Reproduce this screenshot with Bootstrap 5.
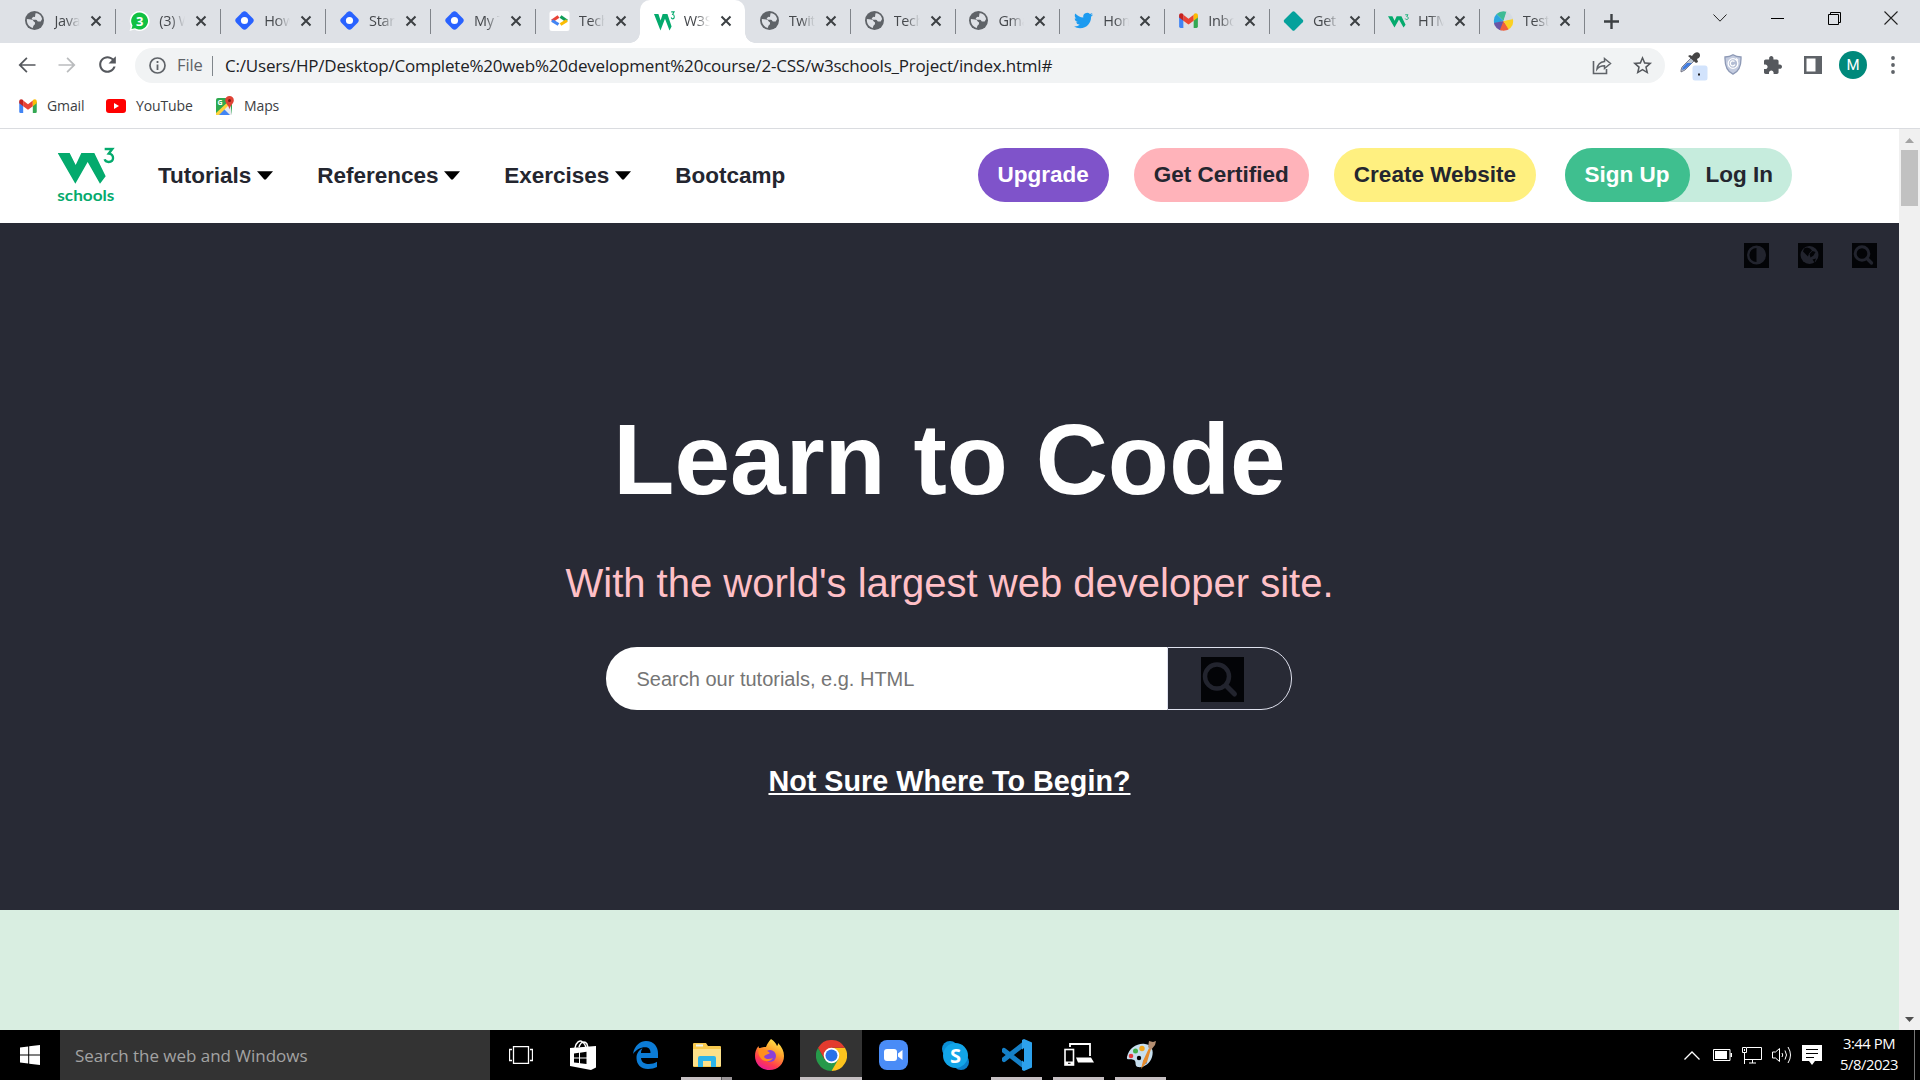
<!DOCTYPE html>
<html lang="en">
<head>
<meta charset="utf-8">
<meta name="viewport" content="width=device-width, initial-scale=1">
<title>W3Schools</title>
<link href="https://cdn.jsdelivr.net/npm/bootstrap@5.3.0/dist/css/bootstrap.min.css" rel="stylesheet">
<style>
  body { width: 1920px; height: 1080px; overflow: hidden; background: #fff; }
  svg { display: block; flex: none; }
  .ui-font { font-family: "Open Sans", "Noto Sans", sans-serif; }
  .site-font { font-family: "Liberation Sans", Arial, sans-serif; color: #282a35; }

  /* browser chrome */
  .tabstrip { height: 43px; background: #dee1e6; padding-left: 11px; }
  .tab-item { width: 104.9px; height: 43px; padding: 0 0 2px 13.4px; position: relative; font-size: 14.5px; letter-spacing: -.35px; color: #45484c; }
  .tab-item::after { content: ""; position: absolute; right: -.5px; top: 9px; width: 1px; height: 25px; background: #80848a; }
  .tab-item.before-active::after, .tab-item.current::after { display: none; }
  .tab-item.current { background: #fff; border-radius: 10px 10px 0 0; }
  .tab-item svg:not(.tab-close) { width: 21px; }
  .tab-curve { position: absolute; bottom: 0; width: 10px; height: 10px; }
  .curve-l { left: -10px; background: radial-gradient(circle at 0 0, #dee1e6 9.5px, #fff 10px); }
  .curve-r { right: -10px; background: radial-gradient(circle at 100% 0, #dee1e6 9.5px, #fff 10px); }
  .tab-title { width: 26px; margin-left: 9px; overflow: hidden; white-space: nowrap; -webkit-mask-image: linear-gradient(90deg, #000 45%, transparent); mask-image: linear-gradient(90deg, #000 45%, transparent); }
  .tab-close { margin-left: 10px; }
  .win-cell { width: 57.2px; height: 36px; }
  .toolbar-row { height: 43px; padding-left: 7px; padding-right: 7px; }
  .nav-cell { width: 40px; height: 40px; }
  .omnibox { width: 1530px; height: 35px; border-radius: 18px; background: #f1f3f4; margin-left: 8px; padding-left: 14px; font-size: 17px; margin-top: 2px; }
  .omni-file { color: #5f6368; margin-left: 11px; font-size: 16.5px; width: 36px; letter-spacing: -.1px; }
  .omni-sep { width: 1px; height: 20px; background: #80868b; margin-left: -1px; }
  .omni-url { color: #202124; margin-left: 12px; white-space: nowrap; letter-spacing: -.2px; }
  .omni-tools { margin-right: 3px; }
  .ext-cells { margin-left: 8px; }
  .avatar-dot { width: 28px; height: 28px; background: #00897b; color: #fff; font: 400 15px Roboto, sans-serif; }
  .bookmarks-row { height: 43px; padding-left: 19px; padding-bottom: 3px; border-bottom: 1px solid #dadce0; font-size: 14px; letter-spacing: -.12px; color: #3c4043; }
  .bookmarks-row span { margin-left: 10px; }

  /* page */
  .viewport-area { height: 901px; }
  .page-area { width: 1899px; }
  .site-nav { height: 94px; padding-left: 57px; padding-bottom: 2px; font-size: 22.5px; }
  .site-logo { margin-top: -2px; }
  .nav-links { margin-left: 43px; gap: 44.3px; font-weight: 700; line-height: 27px; }
  .nav-links a { color: #24262f; text-decoration: none; gap: 5.5px; }
  .pills { margin-right: 107px; font-weight: 700; line-height: 27px; }
  .pill { height: 54px; border-radius: 27px; padding: 0 20px; color: #24262f; text-decoration: none; white-space: nowrap; padding-bottom: 1px; }
  .pill-violet { background: #7f53ca; color: #fff; }
  .pill-pink { background: #ffb3ba; margin-left: 25px; }
  .pill-yellow { background: #fff080; margin-left: 25px; }
  .login-group { background: #c6ecdd; border-radius: 27px; margin-left: 28.5px; }
  .pill-green { background: #3fbf8f; color: #fff; }
  .pill-login { padding-left: 16px; padding-right: 19px; }
  .hero { height: 687px; background: #282a35; padding-top: 20px; }
  .hero-tools { gap: 29px; padding-right: 22px; height: 25px; }
  .hero-title { font-size: 100px; font-weight: 700; line-height: 120px; color: #fff; margin: 131px 0 40px; }
  .hero-sub { font-size: 40px; line-height: 48px; color: #ffc0c7; margin: 0 0 40px; }
  .search-group { width: 686px; height: 63px; margin-right: 2px; }
  .search-input { width: 561px; height: 63px; border: 0; border-radius: 31px 0 0 31px; background: #fff; padding: 1px 0 0 31px; font-size: 20px; color: #282a35; outline: 0; }
  .search-input::placeholder { color: #757575; opacity: 1; }
  .search-btn { width: 125px; height: 63px; background: transparent; border: 1px solid #dfe1ee; border-radius: 0 31px 31px 0; padding: 2px 0 0 33px; }
  .begin-link { display: inline-block; margin-top: 54px; font-size: 28.75px; line-height: 34px; font-weight: 700; color: #fff; text-decoration: underline; }
  .mint-band { background: #d9eee1; }
  .scroll-track { width: 21px; background: #f0f0f0; }
  .scroll-thumb { width: 17px; height: 56px; background: #c1c1c1; }

  /* taskbar */
  .taskbar { height: 50px; background: #000; }
  .start-cell { width: 60px; height: 50px; }
  .cortana { width: 430px; height: 50px; background: #333; color: #a3a3a3; font-size: 17px; padding: 1px 0 0 15px; letter-spacing: -.03px; }
  .task-cell { width: 62px; height: 50px; position: relative; }
  .task-cell.running::after { content: ""; position: absolute; left: 5px; width: 51px; bottom: 0; height: 3px; background: #c5bfc2; }
  .task-cell.multi::after { background: linear-gradient(90deg, #c5bfc2 40px, #555 40px, #555 41px, #989396 41px); }
  .task-cell.focused::after { left: 0; width: 62px; }
  .task-cell.focused { background: #333; }
  .tray { color: #fff; }
  .clock { width: 74px; font-size: 14.8px; line-height: 21px; margin: 0 0 2px 10px; letter-spacing: -.45px; }
  .show-desktop { width: 6px; height: 50px; border-left: 1px solid #777; margin-left: 8px; }
</style>
<script src="https://cdn.jsdelivr.net/npm/bootstrap@5.3.0/dist/js/bootstrap.bundle.min.js"></script>
</head>
<body class="d-flex flex-column">

<!-- shared icons -->
<svg width="0" height="0" class="position-absolute">
  <symbol id="i-globe" viewBox="2 2 20 20"><circle cx="12" cy="12" r="10" fill="#5f6368"/><path fill="#dee1e6" d="M4 10.500l4.500.5c2.500.3 2 2.300 4 2.800v2.200c-1.500.8-1.800 2-2.300 3.800C6.500 19 3.500 15.500 4 10.500zM13 4.500c2.500-.2 6 1.500 7 6l-1.500 2.500h-2.500c-1.500 0-1-1.800-2.500-1.800H10l-1-1.700 2-1.500 1.500.3z"/></symbol>
  <symbol id="i-hash" viewBox="0 0 20 20"><rect x="3" y="3" width="14" height="14" rx="3" transform="rotate(45 10 10)" fill="#2962ff"/><circle cx="10" cy="10" r="3.400" fill="#fff"/></symbol>
  <symbol id="i-x" viewBox="0 0 12 12"><path d="M1.500 1.500l9 9M10.500 1.500l-9 9" stroke="#3c4043" stroke-width="2"/></symbol>
  <symbol id="i-w3" viewBox="53 35 172 112"><path fill="#04aa6d" d="M53 52H89L107 88 124 52H163L197 122 180 144 143 79 106 144Z"/><path fill="none" stroke="#04aa6d" stroke-width="7" d="M194 40H217L206 54C224 56 223 79 206 79C198 79 195 75 194 71"/></symbol>
  <symbol id="i-gmail" viewBox="0 0 20 16"><path fill="#4285f4" d="M0 3v11.500A1.500 1.500 0 0 0 1.500 16H4.500V6z"/><path fill="#34a853" d="M20 3v11.500a1.500 1.500 0 0 1-1.500 1.500H15.500V6z"/><path fill="#ea4335" d="M4.500 1.800L10 6l5.500-4.200v6.400L10 12.300 4.500 8.200z"/><path fill="#c5221f" d="M0 2.500C0 .3 2.300-.5 4 .9l.5.6v6.700L0 4.800z"/><path fill="#fbbc04" d="M20 2.500C20 .3 17.700-.5 16 .9l-.5.6v6.700L20 4.800z"/></symbol>
  <symbol id="i-caret" viewBox="0 0 16 9"><path d="M0 .3h16L9 8.300q-1 .8-2 0z" fill="#000"/></symbol>
  <symbol id="i-lens" viewBox="0 0 25 25"><path fill="#030407" d="M0 0h25v25H0z"/><circle cx="10" cy="10.500" r="6.800" fill="none" stroke="#22242e" stroke-width="3"/><path d="M15 15.500l4.500 4.500" stroke="#22242e" stroke-width="3.400" stroke-linecap="round"/></symbol>
</svg>

<!-- tab strip -->
<div class="tabstrip d-flex ui-font">
  <div class="tab-item d-flex align-items-center"><svg width="19" height="19"><use href="#i-globe"/></svg><span class="tab-title">Java</span><svg class="tab-close" width="12" height="12"><use href="#i-x"/></svg></div>
  <div class="tab-item d-flex align-items-center"><svg width="19" height="20" viewBox="0 0 20 20"><path fill="#fff" d="M10 0a10 10 0 1 1-5 18.600L0 20l1.500-5A10 10 0 0 1 10 0z"/><path fill="#12c143" d="M10 1.500a8.500 8.500 0 1 1-4.500 15.700L2 18l1-3.500A8.500 8.500 0 0 1 10 1.500z"/><text x="10" y="14.500" font-size="13" font-weight="700" text-anchor="middle" fill="#fff">3</text></svg><span class="tab-title">(3) W</span><svg class="tab-close" width="12" height="12"><use href="#i-x"/></svg></div>
  <div class="tab-item d-flex align-items-center"><svg width="21" height="21"><use href="#i-hash"/></svg><span class="tab-title">How</span><svg class="tab-close" width="12" height="12"><use href="#i-x"/></svg></div>
  <div class="tab-item d-flex align-items-center"><svg width="21" height="21"><use href="#i-hash"/></svg><span class="tab-title">Star</span><svg class="tab-close" width="12" height="12"><use href="#i-x"/></svg></div>
  <div class="tab-item d-flex align-items-center"><svg width="21" height="21"><use href="#i-hash"/></svg><span class="tab-title">My T</span><svg class="tab-close" width="12" height="12"><use href="#i-x"/></svg></div>
  <div class="tab-item before-active d-flex align-items-center"><svg width="20" height="20" viewBox="0 0 20 20"><rect width="20" height="20" rx="2.500" fill="#fff"/><g fill="none" stroke-width="3.200"><path stroke="#ea4335" d="M9 5.500L2.500 10"/><path stroke="#4285f4" d="M2.500 9.500L9 13.500"/><path stroke="#0f9d58" d="M11 5.500l6.500 4.500"/><path stroke="#fbbc04" d="M17.500 9.500L11 13.500"/></g></svg><span class="tab-title">Tech</span><svg class="tab-close" width="12" height="12"><use href="#i-x"/></svg></div>
  <div class="tab-item current d-flex align-items-center"><i class="tab-curve curve-l"></i><svg width="21" height="20" viewBox="0 0 21 20"><g transform="scale(.1221 .1786) translate(-53 -35)"><path fill="#04aa6d" d="M53 52H89L107 88 124 52H163L197 122 180 144 143 79 106 144Z"/><path fill="none" stroke="#04aa6d" stroke-width="8" d="M194 40H217L206 54C224 56 223 79 206 79C198 79 195 75 194 71"/></g></svg><span class="tab-title">W3S</span><svg class="tab-close" width="12" height="12"><use href="#i-x"/></svg><i class="tab-curve curve-r"></i></div>
  <div class="tab-item d-flex align-items-center"><svg width="19" height="19"><use href="#i-globe"/></svg><span class="tab-title">Twitt</span><svg class="tab-close" width="12" height="12"><use href="#i-x"/></svg></div>
  <div class="tab-item d-flex align-items-center"><svg width="19" height="19"><use href="#i-globe"/></svg><span class="tab-title">Tech</span><svg class="tab-close" width="12" height="12"><use href="#i-x"/></svg></div>
  <div class="tab-item d-flex align-items-center"><svg width="19" height="19"><use href="#i-globe"/></svg><span class="tab-title">Gma</span><svg class="tab-close" width="12" height="12"><use href="#i-x"/></svg></div>
  <div class="tab-item d-flex align-items-center"><svg width="19" height="19" viewBox="0 0 24 24"><path fill="#1d9bf0" d="M23.953 4.570a10 10 0 01-2.825.775 4.958 4.958 0 002.163-2.723c-.951.555-2.005.959-3.127 1.184a4.920 4.920 0 00-8.384 4.482C7.690 8.095 4.067 6.130 1.640 3.162a4.822 4.822 0 00-.666 2.475c0 1.710.87 3.213 2.188 4.096a4.904 4.904 0 01-2.228-.616v.06a4.923 4.923 0 003.946 4.827 4.996 4.996 0 01-2.212.085 4.936 4.936 0 004.604 3.417 9.867 9.867 0 01-6.102 2.105c-.39 0-.779-.023-1.170-.067a13.995 13.995 0 007.557 2.209c9.053 0 13.998-7.496 13.998-13.985 0-.21 0-.42-.015-.63A9.935 9.935 0 0024 4.590z"/></svg><span class="tab-title">Hom</span><svg class="tab-close" width="12" height="12"><use href="#i-x"/></svg></div>
  <div class="tab-item d-flex align-items-center"><svg width="19" height="15"><use href="#i-gmail"/></svg><span class="tab-title">Inbo</span><svg class="tab-close" width="12" height="12"><use href="#i-x"/></svg></div>
  <div class="tab-item d-flex align-items-center"><svg width="20" height="20" viewBox="0 0 20 20"><path fill="#05a19c" d="M8.800.8a1.800 1.800 0 0 1 2.400 0l8 8a1.800 1.800 0 0 1 0 2.400l-8 8a1.800 1.800 0 0 1-2.400 0l-8-8a1.800 1.800 0 0 1 0-2.400z"/></svg><span class="tab-title">Get</span><svg class="tab-close" width="12" height="12"><use href="#i-x"/></svg></div>
  <div class="tab-item d-flex align-items-center"><svg width="21" height="14"><use href="#i-w3"/></svg><span class="tab-title">HTM</span><svg class="tab-close" width="12" height="12"><use href="#i-x"/></svg></div>
  <div class="tab-item d-flex align-items-center"><svg width="20" height="20" viewBox="0 0 20 20"><clipPath id="ball"><circle cx="10" cy="10" r="9.800"/></clipPath><g clip-path="url(#ball)"><path fill="#3dbb95" d="M10 10L0 0h14z"/><path fill="#2aa5e0" d="M10 10L0 0v13z"/><path fill="#6a55a5" d="M10 10L0 12v8h8z"/><path fill="#f0603c" d="M10 10L6 20h11z"/><path fill="#fbd022" d="M10 10l6 10h4V7z"/><path fill="#d5dbe3" d="M10 10l3-10h7v8z"/></g></svg><span class="tab-title">Test</span><svg class="tab-close" width="12" height="12"><use href="#i-x"/></svg></div>
  <div class="d-flex align-items-center" style="padding-left:20px"><svg width="15" height="15" viewBox="0 0 15 15"><path d="M7.500 0v15M0 7.500h15" stroke="#3c4043" stroke-width="2.400"/></svg></div>
  <div class="ms-auto d-flex">
    <div class="win-cell d-flex align-items-center justify-content-center"><svg width="14" height="8" viewBox="0 0 14 8"><path d="M.5.5L7 7.200 13.500.5" fill="none" stroke="#222"/></svg></div>
    <div class="win-cell d-flex align-items-center justify-content-center"><svg width="13" height="1"><rect width="13" height="1"/></svg></div>
    <div class="win-cell d-flex align-items-center justify-content-center"><svg width="13" height="13" viewBox="0 0 13 13"><path d="M.5 2.500h10v10H.5zM2.500 2.500v-2h10v10h-2" fill="none" stroke="#000"/></svg></div>
    <div class="win-cell d-flex align-items-center justify-content-center"><svg width="14" height="14" viewBox="0 0 14 14"><path d="M.5.5l13 13M13.500.5l-13 13" stroke="#222" stroke-width="1.100"/></svg></div>
  </div>
</div>

<!-- toolbar -->
<div class="toolbar-row d-flex align-items-center ui-font">
  <div class="nav-cell d-flex align-items-center justify-content-center"><svg width="24" height="24" viewBox="0 0 24 24"><path fill="#55585d" d="M20.500 11.200H6.800l5.700-5.700-1.200-1.200L3.500 12l7.800 7.700 1.200-1.200-5.700-5.700h13.700z"/></svg></div>
  <div class="nav-cell d-flex align-items-center justify-content-center"><svg width="24" height="24" viewBox="0 0 24 24"><path fill="#babcbe" d="M3.500 11.200h13.700l-5.700-5.700 1.200-1.200 7.800 7.700-7.800 7.700-1.200-1.200 5.700-5.700H3.500z"/></svg></div>
  <div class="nav-cell d-flex align-items-center justify-content-center"><svg width="25" height="25" viewBox="0 0 24 24"><path fill="#55585d" d="M17.650 6.350C16.200 4.900 14.210 4 12 4c-4.420 0-7.990 3.580-7.990 8s3.570 8 7.990 8c3.730 0 6.840-2.550 7.730-6h-2.080c-.82 2.330-3.040 4-5.650 4-3.310 0-6-2.690-6-6s2.690-6 6-6c1.660 0 3.140.69 4.220 1.780L13 11h7V4l-2.350 2.350z"/></svg></div>
  <div class="omnibox d-flex align-items-center">
    <svg width="17" height="17" viewBox="0 0 17 17"><circle cx="8.500" cy="8.500" r="7.500" fill="none" stroke="#5f6368" stroke-width="1.700"/><path d="M8.500 4v2M8.500 7.500V13" stroke="#5f6368" stroke-width="1.800"/></svg>
    <span class="omni-file">File</span><span class="omni-sep"></span>
    <span class="omni-url">C:/Users/HP/Desktop/Complete%20web%20development%20course/2-CSS/w3schools_Project/index.html#</span>
    <div class="omni-tools ms-auto d-flex">
      <div class="nav-cell d-flex align-items-center justify-content-center"><svg width="20" height="18" viewBox="0 0 20 18"><path d="M1.500 4v12.500h13V12" fill="none" stroke="#5f6368" stroke-width="1.600"/><path d="M12.500 1.500l6 5-6 5V8.700C8.500 8.700 6.500 10 5 12c.5-4 3-7 7.500-7.500z" fill="none" stroke="#5f6368" stroke-width="1.500"/></svg></div>
      <div class="nav-cell d-flex align-items-center justify-content-center"><svg width="21" height="21" viewBox="1 1 22 22"><path fill="#55585d" d="M22 9.240l-7.190-.62L12 2 9.190 8.630 2 9.240l5.460 4.730L5.820 21 12 17.270 18.180 21l-1.630-7.030L22 9.240zM12 15.400l-3.760 2.270 1-4.280-3.320-2.880 4.380-.38L12 6.100l1.710 4.040 4.380.38-3.320 2.880 1 4.280L12 15.400z"/></svg></div>
    </div>
  </div>
  <div class="ext-cells d-flex">
    <div class="nav-cell d-flex align-items-center justify-content-center"><svg width="28" height="26" viewBox="0 0 28 26" overflow="visible"><path d="M2 18l1-3 9-9 3 3-9 9-4 2z" fill="#b9c4d2" stroke="#667" stroke-width=".8"/><path d="M3 18l1-3 4-4h5l-7 6z" fill="#3f7be0"/><path d="M9 4l2-1 2 1c2-3 5-5 7-3s1 5-2 6l1 3-2 1z" fill="#444"/><rect x="13.500" y="13.500" width="15" height="15" rx="2.500" fill="#d2e3fc"/><rect x="19" y="21.500" width="2" height="2" fill="#202124"/></svg></div>
    <div class="nav-cell d-flex align-items-center justify-content-center"><svg width="18" height="21" viewBox="0 0 18 21"><path d="M9 .8C6.500 2.500 3.500 3 1 3c-.3 8 1 14 8 17.200C16 17 17.300 11 17 3c-2.500 0-5.500-.5-8-2.200z" fill="#c3cbdf" stroke="#8d99b5" stroke-width="1.300"/><circle cx="9" cy="9.500" r="4.800" fill="#b3bdd4" stroke="#fff" stroke-width="1.300"/><path d="M10.500 7.500a2.500 2.500 0 1 0 .5 3M12 4.500l2 2" fill="none" stroke="#fff" stroke-width="1.300"/></svg></div>
    <div class="nav-cell d-flex align-items-center justify-content-center"><svg width="18" height="18" viewBox="2 1 21 21"><path fill="#55585d" d="M20.500 11H19V7c0-1.100-.9-2-2-2h-4V3.500C13 2.120 11.880 1 10.500 1S8 2.120 8 3.500V5H4c-1.100 0-1.990.9-1.990 2v3.800H3.500c1.490 0 2.700 1.210 2.700 2.700s-1.210 2.700-2.700 2.700H2V20c0 1.100.9 2 2 2h3.800v-1.500c0-1.490 1.210-2.700 2.700-2.700 1.490 0 2.700 1.210 2.700 2.700V22H17c1.100 0 2-.9 2-2v-4h1.500c1.380 0 2.500-1.120 2.500-2.500S21.880 11 20.500 11z"/></svg></div>
    <div class="nav-cell d-flex align-items-center justify-content-center"><svg width="18" height="18" viewBox="0 0 18 18"><path fill="#5f6368" fill-rule="evenodd" d="M0 0h18v18H0zM2.500 2.500v13h9v-13z"/></svg></div>
    <div class="nav-cell d-flex align-items-center justify-content-center"><div class="avatar-dot rounded-circle d-flex align-items-center justify-content-center">M</div></div>
    <div class="nav-cell d-flex align-items-center justify-content-center"><svg width="4" height="18" viewBox="0 0 4 18"><g fill="#5f6368"><circle cx="2" cy="2" r="1.900"/><circle cx="2" cy="9" r="1.900"/><circle cx="2" cy="16" r="1.900"/></g></svg></div>
  </div>
</div>

<!-- bookmarks -->
<div class="bookmarks-row d-flex align-items-center ui-font">
  <svg width="18" height="14"><use href="#i-gmail"/></svg><span style="width:39px">Gmail</span>
  <svg width="20" height="14" viewBox="0 0 20 14" style="margin-left:20px"><rect width="20" height="14" rx="3" fill="#f00"/><path d="M8 4v6l5-3z" fill="#fff"/></svg><span style="width:58px">YouTube</span>
  <svg width="18" height="20" viewBox="0 0 18 20" style="margin-left:22px"><rect y="2" width="16" height="17" rx="2" fill="#2da94f"/><path d="M0 19L14 5l2 14z" fill="#e8eaed"/><path d="M2 19l6-6 6 6z" fill="#4285f4"/><path d="M0 17L14 4v4L3 19H0z" fill="#fdd23c"/><text x="1.500" y="9" font-size="7" font-weight="700" fill="#fff">G</text><path d="M13.500 0a4.300 4.300 0 0 1 4.300 4.500c0 3-3.500 4.500-4.300 9-.8-4.500-4.300-6-4.300-9A4.300 4.300 0 0 1 13.500 0z" fill="#e04335"/><circle cx="13.500" cy="4.500" r="1.500" fill="#7c1c12"/></svg><span>Maps</span>
</div>

<!-- page -->
<div class="viewport-area d-flex">
  <main class="page-area d-flex flex-column site-font">
    <nav class="site-nav d-flex align-items-center">
      <svg class="site-logo" width="58" height="55" viewBox="51 34 174 165"><use href="#i-w3" x="53" y="35" width="172" height="112"/><text x="52" y="195" textLength="171" lengthAdjust="spacingAndGlyphs" font-family="Lato, sans-serif" font-weight="700" font-size="46" fill="#04aa6d">schools</text></svg>
      <div class="nav-links d-flex">
        <a href="#" class="d-flex align-items-center">Tutorials<svg width="16" height="9"><use href="#i-caret"/></svg></a>
        <a href="#" class="d-flex align-items-center">References<svg width="16" height="9"><use href="#i-caret"/></svg></a>
        <a href="#" class="d-flex align-items-center">Exercises<svg width="16" height="9"><use href="#i-caret"/></svg></a>
        <a href="#">Bootcamp</a>
      </div>
      <div class="pills d-flex ms-auto">
        <a href="#" class="pill pill-violet d-flex align-items-center">Upgrade</a>
        <a href="#" class="pill pill-pink d-flex align-items-center">Get Certified</a>
        <a href="#" class="pill pill-yellow d-flex align-items-center">Create Website</a>
        <div class="login-group d-flex"><a href="#" class="pill pill-green d-flex align-items-center">Sign Up</a><a href="#" class="pill pill-login d-flex align-items-center">Log In</a></div>
      </div>
    </nav>
    <section class="hero d-flex flex-column align-items-center">
      <div class="hero-tools d-flex align-self-end">
        <svg width="25" height="25" viewBox="0 0 25 25"><path fill="#030407" d="M0 0h25v25H0z"/><circle cx="12.500" cy="12" r="8.300" fill="none" stroke="#22242e" stroke-width="2.400"/><path d="M12.500 3a9 9 0 0 1 0 18z" fill="#22242e"/></svg>
        <svg width="25" height="25" viewBox="0 0 25 25"><path fill="#030407" d="M0 0h25v25H0z"/><circle cx="11.500" cy="12" r="9" fill="#22242e"/><path d="M6 5.500l3-1 3 1 2 2-3 3-1 3-3-3-2-2zM11.500 11l3-3 3 1-2 3.500-3 2zM14.500 16.500l3.500-1-1.500 4z" fill="#030407"/></svg>
        <svg width="25" height="25"><use href="#i-lens"/></svg>
      </div>
      <h1 class="hero-title">Learn to Code</h1>
      <p class="hero-sub">With the world's largest web developer site.</p>
      <div class="search-group d-flex">
        <input class="search-input" type="text" placeholder="Search our tutorials, e.g. HTML">
        <button class="search-btn d-flex align-items-center" aria-label="Search"><svg width="43" height="45" viewBox="0 0 43 45"><path fill="#030407" d="M0 0h43v45H0z"/><circle cx="16" cy="19.500" r="12" fill="none" stroke="#22242e" stroke-width="4.500"/><path d="M25 28.500l8.500 8.500" stroke="#22242e" stroke-width="5" stroke-linecap="round"/></svg></button>
      </div>
      <a href="#" class="begin-link">Not Sure Where To Begin?</a>
    </section>
    <section class="mint-band flex-grow-1"></section>
  </main>
  <div class="scroll-track d-flex flex-column align-items-center">
    <svg width="9" height="5" viewBox="0 0 9 5" style="margin:9px 0 7px"><path d="M0 5L4.500 0 9 5z" fill="#a3a3a3"/></svg>
    <div class="scroll-thumb"></div>
    <svg class="mt-auto" width="9" height="5" viewBox="0 0 9 5" style="margin-bottom:8px"><path d="M0 0l4.500 5L9 0z" fill="#505050"/></svg>
  </div>
</div>

<!-- taskbar -->
<footer class="taskbar d-flex ui-font">
  <div class="start-cell d-flex align-items-center justify-content-center"><svg width="20" height="20" viewBox="0 0 20 20"><path fill="#fff" d="M0 2.600l8.200-1.200v8.100H0zM9.200 1.300L20 0v9.500H9.200zM0 10.500h8.200v8.100L0 17.500zM9.200 10.500H20V20L9.200 18.700z"/></svg></div>
  <div class="cortana d-flex align-items-center">Search the web and Windows</div>
  <div class="task-cell d-flex align-items-center justify-content-center"><svg width="24" height="18" viewBox="0 0 24 18"><path d="M4.500.5h15v17h-15zM3 3.500H.5v11H3M21 3.500h2.500v11H21" fill="none" stroke="#fff" stroke-width="1.300"/></svg></div>
  <div class="task-cell d-flex align-items-center justify-content-center"><svg width="26" height="30" viewBox="0 0 26 30"><path d="M5 8C6 2 10 0 12 1.500S16 5 16 9M9 7c2-6 6-6 8-3l1 4" fill="none" stroke="#fff" stroke-width="1.500"/><path d="M0 8l26-2v21.500L21 30 0 26z" fill="#fff"/><path d="M4 13.500l5-.7v4.700H4zM10 12.700l6.500-.9v5.700H10zM4 18.500h5v4.600l-5-.7zM10 18.500h6.500V24l-6.500-.8z" fill="#000"/></svg></div>
  <div class="task-cell d-flex align-items-center justify-content-center"><svg width="25" height="28" viewBox="0 0 25 28"><path fill="#0c7cd6" d="M0 13C1.500 4 7.500 0 13 0c8 0 12 6 12 12.500V17H8c.3 4.500 4 6 8 6 3 0 5.500-.8 8-2.200v5.200c-2.500 1.300-5.500 2-9 2C8 28 3.500 23.500 3.500 17c0-4.500 2.200-7.800 6-9.700C8.500 8.800 8 10.300 8 12h9.500c0-4-2-5.700-5.500-5.700C7.500 6.300 3 9 0 13z"/></svg></div>
  <div class="task-cell running multi d-flex align-items-center justify-content-center"><svg width="28" height="25" viewBox="0 0 28 25"><path d="M0 1q0-1 1-1h12l2 3h12q1 0 1 1v19q0 1-1 1H1q-1 0-1-1z" fill="#f7c94e"/><path d="M0 6h28v17H0z" fill="#fbe08a"/><path d="M3 1.500h7v2H3z" fill="#e9f3f5"/><path d="M5 24V15q0-2 2-2h14q2 0 2 2v9h-5v-6h-8v6z" fill="#2bb4ea"/></svg></div>
  <div class="task-cell d-flex align-items-center justify-content-center"><svg width="29" height="32" viewBox="0 0 29 32"><defs><linearGradient id="fx" x1=".8" y1="0" x2=".3" y2="1"><stop offset="0" stop-color="#fff14f"/><stop offset=".4" stop-color="#ffa02c"/><stop offset=".75" stop-color="#ff3d4d"/><stop offset="1" stop-color="#e8189a"/></linearGradient></defs><path d="M16 0c3 2 5 4 6 7 1-1 1-2 1-3 4 4 6 8 6 13 0 8-6 14-14.500 14S0 25 0 17c0-4 1-7 3.500-10 0 1 .5 2 1 2.500C7 8 9 8 11 8c1-3 3-6 5-8z" fill="url(#fx)"/><circle cx="15" cy="17" r="6" fill="#8b3fd9"/><path d="M4 9l7 2 4 3c-2 2-5 1-6 4 2 3 6 2 9 1-2 4-10 5-13-1-2-3-2-6-1-9z" fill="#ff8e1e"/></svg></div>
  <div class="task-cell running focused d-flex align-items-center justify-content-center"><svg width="31" height="31" viewBox="0 0 48 48"><path fill="#fcc31e" d="M24 24l20.800-12A24 24 0 0 1 24 48z M24 12h20.800v2L34 30z"/><path fill="#26994a" d="M3.200 12A24 24 0 0 0 24 48l10.400-18H24L13.600 30z"/><path fill="#e33b2e" d="M24 12h20.800A24 24 0 0 0 3.200 12l10.400 18z"/><circle cx="24" cy="24" r="12" fill="#fff"/><circle cx="24" cy="24" r="9.300" fill="#2b72e8"/></svg></div>
  <div class="task-cell d-flex align-items-center justify-content-center"><svg width="29" height="30" viewBox="0 0 29 30"><rect width="29" height="30" rx="8" fill="#4a8cf7"/><rect x="5" y="9" width="13" height="12" rx="3" fill="#fff"/><path d="M19 13.500l4.500-3.500v10L19 16.500z" fill="#fff"/></svg></div>
  <div class="task-cell d-flex align-items-center justify-content-center"><svg width="27" height="29" viewBox="0 0 27 29"><circle cx="8" cy="8" r="8" fill="#0b8fd6"/><circle cx="19" cy="21" r="8" fill="#0b7fcb"/><circle cx="13.500" cy="14.500" r="12.500" fill="#12a5e8"/><text x="13.500" y="21.500" text-anchor="middle" font-family="Open Sans, sans-serif" font-size="20" font-weight="700" fill="#fff">S</text></svg></div>
  <div class="task-cell running d-flex align-items-center justify-content-center"><svg width="30" height="32" viewBox="0 0 30 32"><path d="M22 5L2 20.500M2 11.500L22 27" stroke="#1580c8" stroke-width="5" stroke-linecap="round"/><path d="M22 0l8 3.500v25L22 32l-2-1V1z" fill="#2da1ec"/><path d="M22 9v14l-8.500-7z" fill="#000"/></svg></div>
  <div class="task-cell running d-flex align-items-center justify-content-center"><svg width="30" height="24" viewBox="0 0 30 24"><path d="M6 4V1h20v12" fill="none" stroke="#fff" stroke-width="1.800"/><rect x="1" y="6.500" width="8.500" height="15.500" fill="#000" stroke="#fff" stroke-width="1.600"/><path d="M1 18.500h8.500v3.500H1zM12 14.500h15l3 5H14z" fill="#fff"/><path d="M4 20.300h2.500" stroke="#000"/></svg></div>
  <div class="task-cell running d-flex align-items-center justify-content-center"><svg width="30" height="30" viewBox="0 0 30 30"><path d="M1 17C3 8 11 3 19 4c7 1 9 7 7 13-2 7-9 11-14 10-4-1-1-5-4-7s-8 1-7-3z" fill="#c6deee"/><circle cx="5" cy="16" r="2.300" fill="#e23b3b"/><circle cx="9.500" cy="11" r="2.500" fill="#42b04a"/><circle cx="16" cy="8.500" r="2.700" fill="#f2a51c"/><circle cx="13" cy="18" r="2.200" fill="#000"/><circle cx="19" cy="22" r="2.200" fill="#378ce0"/><path d="M15 29l2-8 6-13 2 1-4 13z" fill="#e58a2c"/><path d="M22 7l1-6 4 1 3-1-1 4-4 5z" fill="#b58f72"/></svg></div>
  <div class="tray d-flex align-items-center ms-auto">
    <svg width="16" height="9" viewBox="0 0 16 9"><path d="M.5 8.500L8 1l7.500 7.500" fill="none" stroke="#fff" stroke-width="1.300"/></svg>
    <svg width="19" height="12" viewBox="0 0 19 12" style="margin-left:13px"><path d="M.5.500h16.500v11H.5z" fill="none" stroke="#fff"/><path d="M2 2h12v8H2zM17.500 4H19v4h-1.500z" fill="#fff"/></svg>
    <svg width="20" height="17" viewBox="0 0 20 17" style="margin-left:10px"><path d="M5 .5h14.500v12H3M10.500 12.500v3.500M7 16h7M2.500 6v11" fill="none" stroke="#fff"/><path d="M.5.5h4v5h-4zM2.500 2v2" fill="none" stroke="#fff"/></svg>
    <svg width="20" height="18" viewBox="0 0 20 18" style="margin-left:10px"><path d="M.5 6h3l4-3.500v13L3.500 12h-3zM10 7q1.500 2 0 4M13 4.500q3 4.500 0 9M16 1q5 8 0 16" fill="none" stroke="#fff"/></svg>
    <svg width="20" height="20" viewBox="0 0 20 20" style="margin-left:10px"><path d="M0 0h20v16h-7l-3 4-3-4H0z" fill="#fff"/><path d="M4 4.500h12M4 8.500h12M4 12.500h8" stroke="#000"/></svg>
    <div class="clock text-center">3:44 PM<br>5/8/2023</div>
    <div class="show-desktop"></div>
  </div>
</footer>
</body>
</html>
